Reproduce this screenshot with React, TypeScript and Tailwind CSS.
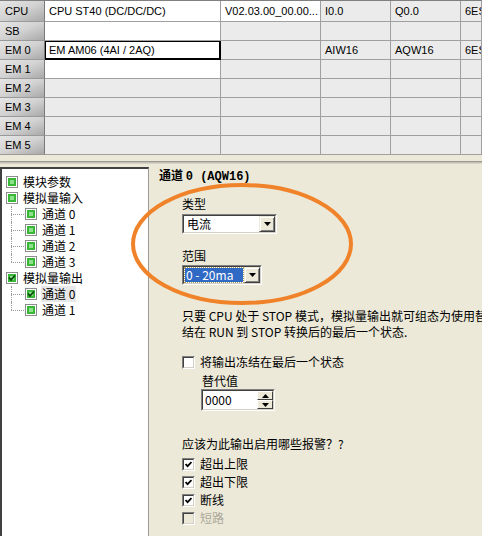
import React from 'react';

type Row = { h: string; c: string[]; white: number[]; sel?: number };

const rows: Row[] = [
  { h: 'CPU', c: ['CPU ST40 (DC/DC/DC)', 'V02.03.00_00.00...', 'I0.0', 'Q0.0', '6ES7 288-1ST40-0AA0'], white: [0, 1] },
  { h: 'SB', c: ['', '', '', '', ''], white: [0] },
  { h: 'EM 0', c: ['EM AM06 (4AI / 2AQ)', '', 'AIW16', 'AQW16', '6ES7 288-3AM06-0AA0'], white: [0], sel: 0 },
  { h: 'EM 1', c: ['', '', '', '', ''], white: [0] },
  { h: 'EM 2', c: ['', '', '', '', ''], white: [] },
  { h: 'EM 3', c: ['', '', '', '', ''], white: [] },
  { h: 'EM 4', c: ['', '', '', '', ''], white: [] },
  { h: 'EM 5', c: ['', '', '', '', ''], white: [] },
];

const tree = [
  { label: '模块参数', level: 0 },
  { label: '模拟量输入', level: 0 },
  { label: '通道 0', level: 1 },
  { label: '通道 1', level: 1 },
  { label: '通道 2', level: 1 },
  { label: '通道 3', level: 1, last: true },
  { label: '模拟量输出', level: 0, checked: true },
  { label: '通道 0', level: 1, checked: true, selected: true },
  { label: '通道 1', level: 1, last: true },
];

function Sunken({ className, children }: { className?: string; children?: React.ReactNode }) {
  return (
    <div className={`border border-t-[#808080] border-l-[#808080] border-r-white border-b-white ${className ?? ''}`}>
      <div className="border border-t-[#404040] border-l-[#404040] border-r-[#d4d0c8] border-b-[#d4d0c8] bg-white flex h-full w-full">
        {children}
      </div>
    </div>
  );
}

function Arrow({ up }: { up?: boolean }) {
  return (
    <svg width="7" height="4" viewBox="0 0 7 4">
      <path d={up ? 'M3.5 0L7 4H0z' : 'M0 0h7L3.5 4z'} fill="#000" />
    </svg>
  );
}

function DropBtn() {
  return (
    <span className="w-[16px] h-full shrink-0 bg-[#ece9d8] border border-t-[#ece9d8] border-l-[#ece9d8] border-r-[#404040] border-b-[#404040] shadow-[inset_1px_1px_0_#fff,inset_-1px_-1px_0_#808080] flex items-center justify-center">
      <Arrow />
    </span>
  );
}

function CheckBox({ checked, disabled }: { checked?: boolean; disabled?: boolean }) {
  return (
    <span className="w-[13px] h-[13px] shrink-0 border border-t-[#808080] border-l-[#808080] border-r-white border-b-white flex">
      <span
        className={`flex-1 border border-t-[#404040] border-l-[#404040] border-r-[#d4d0c8] border-b-[#d4d0c8] flex items-center justify-center ${
          disabled ? 'bg-[#ece9d8]' : 'bg-white'
        }`}
      >
        {checked && (
          <svg width="7" height="7" viewBox="0 0 7 7">
            <polyline points="0.5,3 2.6,5.2 6.5,1" fill="none" stroke="#000" strokeWidth="1.8" />
          </svg>
        )}
      </span>
    </span>
  );
}

function TreeBox({ checked }: { checked?: boolean }) {
  return (
    <span className="relative w-[12px] h-[12px] shrink-0 border border-[#8c8c8c] bg-white p-px flex">
      <span className="flex-1 bg-[#38b838] p-[2px] flex">
        <span className="flex-1 bg-[#8ee08a]" />
      </span>
      {checked && (
        <svg className="absolute left-[1px] top-[1px]" width="8" height="8" viewBox="0 0 8 8">
          <polyline points="1,3.5 3,5.8 7,1.5" fill="none" stroke="#0d4a0d" strokeWidth="1.8" />
        </svg>
      )}
    </span>
  );
}

export default function App() {
  return (
    <div className="relative w-[482px] h-[536px] overflow-hidden bg-[#ece9d8] flex flex-col font-['Liberation_Sans','Noto_Sans_CJK_SC',sans-serif] text-black">
      {/* module table */}
      <div className="border-t border-[#808080] text-[11px]">
        {rows.map((r, i) => (
          <div
            key={r.h}
            className={`grid grid-cols-[45px_176px_100px_70px_70px_1fr] ${i === 0 ? 'h-[21px]' : 'h-[19px]'}`}
          >
            <div className="border-r border-b border-r-[#7a7a7a] border-b-[#9a9a9a] bg-linear-to-br from-[#e6e6e6] via-[#d2d2d2] to-[#a9a9a9] pl-[5px] flex items-center">
              {r.h}
            </div>
            {r.c.map((t, j) => (
              <div
                key={j}
                className={`border-r border-b border-[#a0a0a0] pl-[4px] flex items-center whitespace-nowrap overflow-hidden ${
                  r.white.includes(j) ? 'bg-white' : 'bg-[#ebebeb]'
                } ${r.sel === j ? 'shadow-[inset_0_0_0_1px_#000] border-r-black border-b-black' : ''}`}
              >
                {t}
              </div>
            ))}
          </div>
        ))}
      </div>

      <div className="h-[6px]" />
      <div className="h-[3px] border-t border-b border-t-[#9a9892] border-b-[#d6d3c6] bg-[#c4c1b4]" />

      <div className="flex flex-1 pt-[3px] text-[12px] leading-[16px] font-['Noto_Sans_CJK_SC',sans-serif]">
        {/* tree */}
        <div className="w-[149px] shrink-0 border-t-2 border-l-2 border-t-[#404040] border-l-[#404040] border-r border-r-[#9a9a9a] bg-white pt-[5px]">
          {tree.map((n, i) => (
            <div key={i} className={`flex items-center h-[16px] ${n.level === 0 ? 'pl-[4px]' : 'pl-[9px]'}`}>
              {n.level === 1 && (
                <span className="relative w-[14px] h-[16px] shrink-0">
                  <span
                    className={`absolute left-0 top-0 border-l border-dotted border-[#9a9a9a] ${n.last ? 'h-[8px]' : 'h-[16px]'}`}
                  />
                  <span className="absolute left-0 top-[8px] w-[13px] border-t border-dotted border-[#9a9a9a]" />
                </span>
              )}
              <TreeBox checked={n.checked} />
              <span className={`ml-[4px] px-[1px] ${n.selected ? 'bg-[#e8e8e8]' : ''}`}>{n.label}</span>
            </div>
          ))}
        </div>

        {/* channel settings */}
        <div className="w-[333px] shrink-0 flex flex-col items-start">
          <div className="pl-[10px] font-bold">
            通道 <span className="font-['Liberation_Mono',monospace]">0 (AQW16)</span>
          </div>
          <div className="pl-[33px] w-full flex flex-col items-start">
            <div className="mt-[11px]">类型</div>
            <Sunken className="mt-[2px] w-[95px] h-[20px]">
              <span className="flex-1 pl-[3px] leading-[16px]">电流</span>
              <DropBtn />
            </Sunken>
            <div className="mt-[14px]">范围</div>
            <Sunken className="mt-[1px] w-[80px] h-[20px]">
              <span className="flex-1 m-px bg-[#316ac5] text-white pl-[1px] leading-[14px] outline-1 outline-dotted outline-[#b0a060]">
                0 - 20ma
              </span>
              <DropBtn />
            </Sunken>
            <div className="mt-[23px] w-[300px] overflow-hidden text-left">
              <p className="whitespace-nowrap">只要 CPU 处于 STOP 模式，模拟量输出就可组态为使用替代值或冻</p>
              <p className="whitespace-nowrap">结在 RUN 到 STOP 转换后的最后一个状态.</p>
            </div>
            <label className="mt-[14px] h-[16px] flex items-center gap-[5px]">
              <CheckBox />
              <span>将输出冻结在最后一个状态</span>
            </label>
            <div className="mt-[3px] pl-[20px]">替代值</div>
            <Sunken className="ml-[19px] w-[74px] h-[22px]">
              <span className="flex-1 pl-[2px] leading-[18px]">0000</span>
              <span className="w-[16px] flex flex-col shrink-0">
                <span className="flex-1 bg-[#ece9d8] border border-t-white border-l-white border-r-[#404040] border-b-[#404040] flex items-center justify-center">
                  <Arrow up />
                </span>
                <span className="flex-1 bg-[#ece9d8] border border-t-white border-l-white border-r-[#404040] border-b-[#404040] flex items-center justify-center">
                  <Arrow />
                </span>
              </span>
            </Sunken>
            <div className="mt-[25px]">应该为此输出启用哪些报警？?</div>
            <div className="mt-[3px] flex flex-col">
              {[
                { t: '超出上限', c: true },
                { t: '超出下限', c: true },
                { t: '断线', c: true },
                { t: '短路', c: false, d: true },
              ].map((o) => (
                <label key={o.t} className="h-[18px] flex items-center gap-[5px]">
                  <CheckBox checked={o.c} disabled={o.d} />
                  <span className={o.d ? 'text-[#aca899]' : ''}>{o.t}</span>
                </label>
              ))}
            </div>
          </div>
        </div>
      </div>

      {/* orange highlight drawn over the screenshot */}
      <svg className="absolute left-[128px] top-[180px] pointer-events-none" width="232" height="132" viewBox="0 0 232 132">
        <ellipse cx="114" cy="64" rx="109" ry="59" fill="none" stroke="#f0832a" strokeWidth="4" />
      </svg>
    </div>
  );
}
